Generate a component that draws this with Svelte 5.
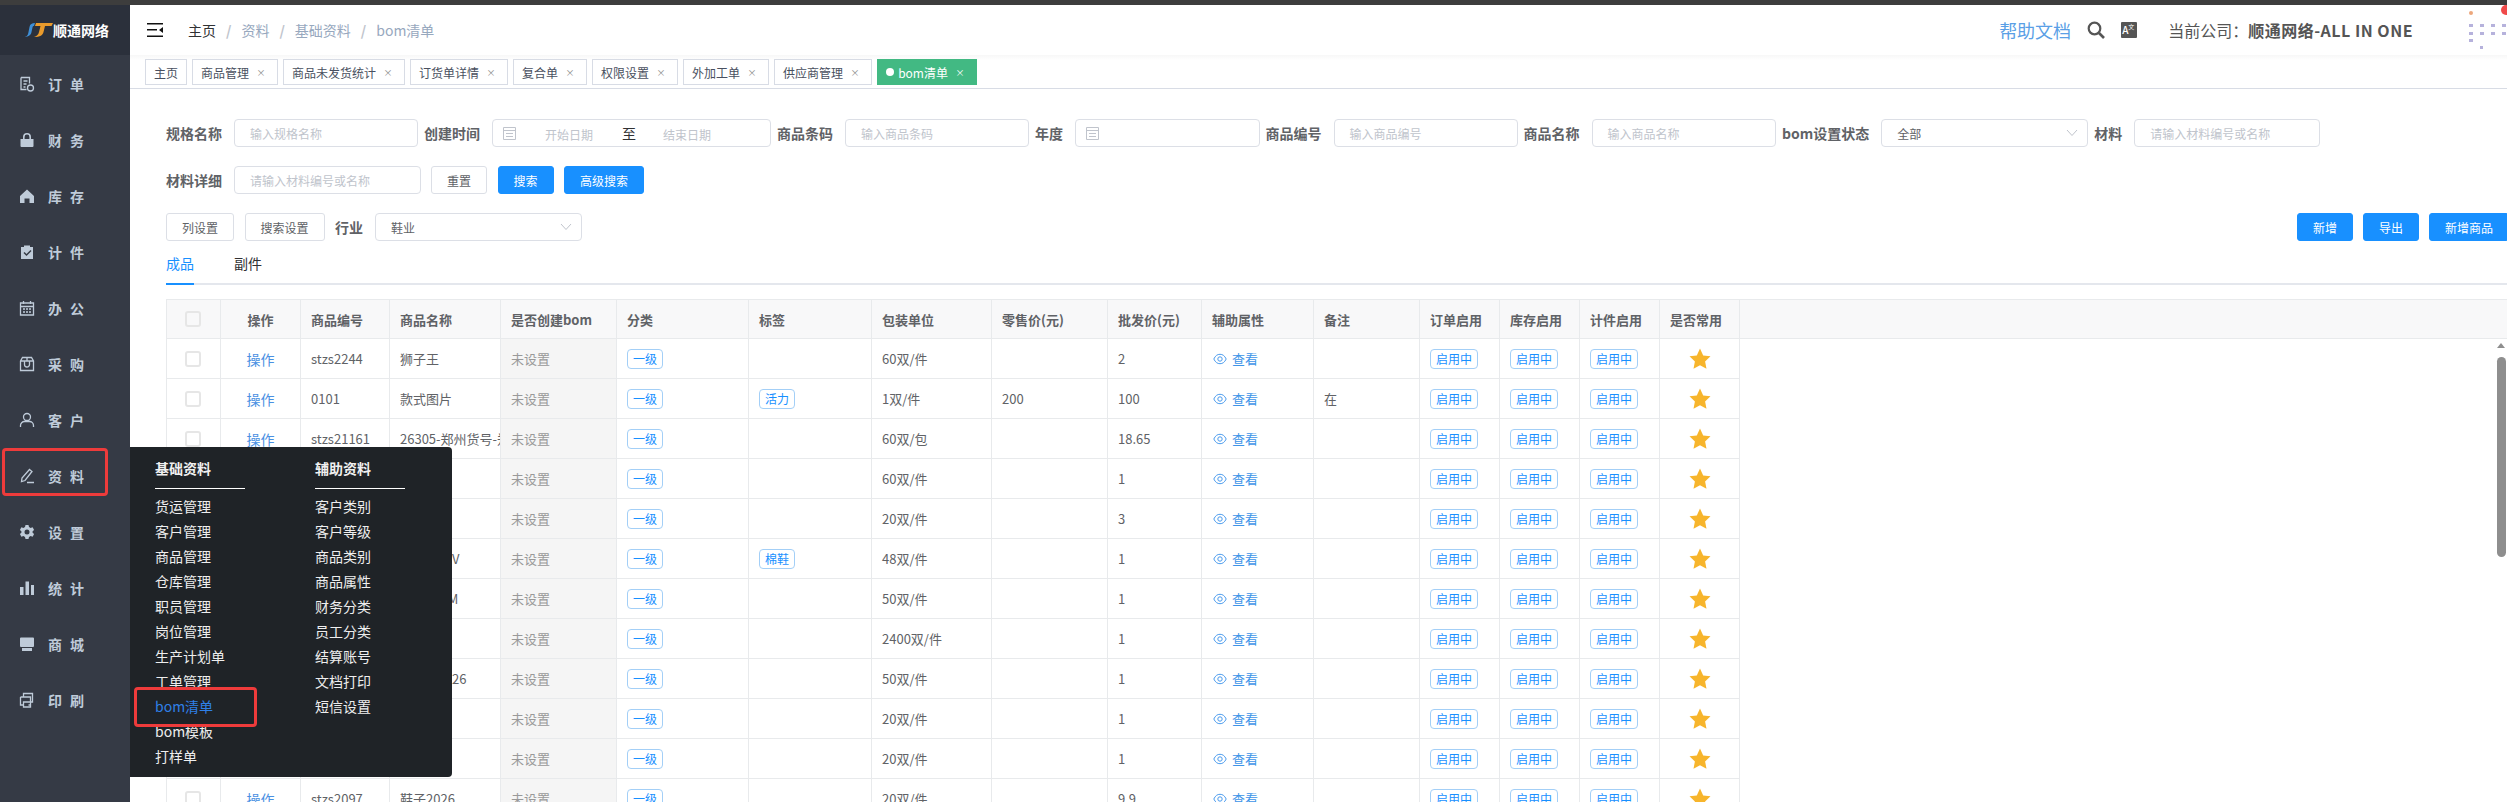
<script lang="ts">
  const navItems = [
    { label: "订单", solid: false, d: "M2 1.5h8.5v6M2 1.5v12h5.5M4.5 5h4M4.5 8h3M4.5 11h2M14.5 12a3 3 0 1 1-6 0a3 3 0 1 1 6 0z" },
    { label: "财务", solid: true, d: "M1.5 7h13v7a1 1 0 0 1-1 1h-11a1 1 0 0 1-1-1zM4 7V5a4 4 0 0 1 8 0v2h-1.6V5a2.4 2.4 0 0 0-4.8 0v2z" },
    { label: "库存", solid: true, d: "M8 1.5 15 8v7h-4.5v-4.5h-5V15H1V8z" },
    { label: "计件", solid: true, d: "M2 3h3V1.5h6V3h3v12H2zM4.5 9l1-1 2 2 4-4 1 1-5 5z" },
    { label: "办公", solid: false, d: "M1.5 3h13v12h-13zM1.5 6.5h13M4.5 1v3M11.5 1v3M4 9h2M7 9h2M10 9h2M4 12h2M7 12h2M10 12h2" },
    { label: "采购", solid: false, d: "M1.5 5 3.5 1.5h9L14.5 5v9.5h-13zM1.5 5h13M8 1.5V5M5.5 5v3.5a2.5 2.5 0 0 0 5 0V5" },
    { label: "客户", solid: false, d: "M8 1.5a3.5 3.5 0 1 1 0 7a3.5 3.5 0 1 1 0-7zM1.5 15v-1.5a4 4 0 0 1 4-4h5a4 4 0 0 1 4 4V15" },
    { label: "资料", solid: false, d: "M10.5 1.5l2.5 2-7 9-3.5 1 .5-3.5zM8 14.5h7" },
    { label: "设置", solid: true, d: "M6.5 1h3l.5 2 1.6.9 2-.6 1.5 2.6-1.5 1.4v1.4l1.5 1.4-1.5 2.6-2-.6-1.6.9-.5 2h-3l-.5-2-1.6-.9-2 .6L.9 10.1l1.5-1.4V7.3L.9 5.9l1.5-2.6 2 .6L6 3zM8 5.5a2.5 2.5 0 1 0 0 5a2.5 2.5 0 1 0 0-5z" },
    { label: "统计", solid: true, d: "M1 7h3.5v8H1zM6.5 1.5h3.5V15H6.5zM12 5h3v10h-3z" },
    { label: "商城", solid: true, d: "M2 1.5h12a1 1 0 0 1 1 1V10a1 1 0 0 1-1 1H2a1 1 0 0 1-1-1V2.5a1 1 0 0 1 1-1zM3 12h10v3H3z" },
    { label: "印刷", solid: false, d: "M4.5 5V1.5h9V10h-2M1.5 5h10v8h-2M1.5 5v8h3M4.5 10h7v5h-7z" },
  ];

  const tabs = ["商品管理", "商品未发货统计", "订货单详情", "复合单", "权限设置", "外加工单", "供应商管理"];

  const filterRow = [
    { label: "规格名称", kind: "input", ph: "输入规格名称", width: 184 },
    { label: "创建时间", kind: "range", width: 279 },
    { label: "商品条码", kind: "input", ph: "输入商品条码", width: 184 },
    { label: "年度", kind: "date", width: 184.5 },
    { label: "商品编号", kind: "input", ph: "输入商品编号", width: 184 },
    { label: "商品名称", kind: "input", ph: "输入商品名称", width: 184.5 },
    { label: "bom设置状态", kind: "select", value: "全部", width: 207 },
    { label: "材料", kind: "input", ph: "请输入材料编号或名称", width: 186 },
  ];

  const colWidths = [55, 80, 89, 111, 116, 132, 123, 120, 116, 94, 112, 106, 80, 80, 80, 80];
  const headers = ["商品编号", "商品名称", "是否创建bom", "分类", "标签", "包装单位", "零售价(元)", "批发价(元)", "辅助属性", "备注", "订单启用", "库存启用", "计件启用", "是否常用"];

  const rows = [
    { code: "stzs2244", name: "狮子王", tag: "", pack: "60双/件", retail: "", price: "2", note: "" },
    { code: "0101", name: "款式图片", tag: "活力", pack: "1双/件", retail: "200", price: "100", note: "在" },
    { code: "stzs21161", name: "26305-郑州货号-郑州", tag: "", pack: "60双/包", retail: "", price: "18.65", note: "" },
    { code: "", name: "", tag: "", pack: "60双/件", retail: "", price: "1", note: "" },
    { code: "", name: "", tag: "", pack: "20双/件", retail: "", price: "3", note: "" },
    { code: "", name: "女款棉鞋V", tag: "棉鞋", pack: "48双/件", retail: "", price: "1", note: "" },
    { code: "", name: "棉鞋026M", tag: "", pack: "50双/件", retail: "", price: "1", note: "" },
    { code: "", name: "", tag: "", pack: "2400双/件", retail: "", price: "1", note: "" },
    { code: "", name: "鞋子款式26", tag: "", pack: "50双/件", retail: "", price: "1", note: "" },
    { code: "", name: "", tag: "", pack: "20双/件", retail: "", price: "1", note: "" },
    { code: "", name: "", tag: "", pack: "20双/件", retail: "", price: "1", note: "" },
    { code: "stzs2097", name: "鞋子2026", tag: "", pack: "20双/件", retail: "", price: "9.9", note: "" },
  ];

  const menuBase = ["货运管理", "客户管理", "商品管理", "仓库管理", "职员管理", "岗位管理", "生产计划单", "工单管理", "bom清单", "bom模板", "打样单"];
  const menuAux = ["客户类别", "客户等级", "商品类别", "商品属性", "财务分类", "员工分类", "结算账号", "文档打印", "短信设置"];

  // thumbnail in the top right corner
  const thumbDots = [
    [0, 0], [11, 0], [22, 0], [33, 0],
    [0, 8], [11, 8], [22, 8], [33, 8],
    [0, 15],
  ];
</script>

<div class="page">
  <div class="strip"></div>
  <div class="shell">
    <aside class="sidebar">
      <div class="logo">
        <svg width="30" height="16" viewBox="0 0 30 16">
          <path d="M1 15C3 15 5 14 5.500 10L6.500 5C7 2 9 1 12 1L11 4C10 4 9.700 4.500 9.500 5.500L8.500 10C8 13.500 5 15 1 15z" fill="#3f8fd6" />
          <path d="M13 1h17l-1.500 3H22l-1.500 6C20 13 17 15 11 15c3-1 4.500-2.500 5-5L17.500 4H12z" fill="#e99a2c" />
        </svg>
        <span>顺通网络</span>
      </div>
      <nav>
        {#each navItems as item}
          <div class="nav-item">
            <svg class="nav-icon" class:solid={item.solid} viewBox="0 0 16 16"><path d={item.d} /></svg>
            <span>{item.label}</span>
          </div>
        {/each}
      </nav>
    </aside>

    <main class="main">
      <header class="topbar">
        <svg class="hamburger" width="16" height="14" viewBox="0 0 16 14">
          <path d="M0 0h16v1.500H0zM0 6h10v1.500H0zM0 12.500h16V14H0zM16 4v6l-4-3z" fill="#111" />
        </svg>
        <div class="crumbs">
          <span class="crumb-home">主页</span>
          <span class="sep">/</span>
          <span>资料</span>
          <span class="sep">/</span>
          <span>基础资料</span>
          <span class="sep">/</span>
          <span>bom清单</span>
        </div>
        <div class="top-right">
          <span class="help">帮助文档</span>
          <svg class="search" width="18" height="18" viewBox="0 0 18 18">
            <circle cx="7.500" cy="7.500" r="5.800" fill="none" stroke="#555" stroke-width="2.200" />
            <path d="M12 12l5 5" stroke="#555" stroke-width="2.600" />
          </svg>
          <span class="lang"><b>A</b><i>文</i></span>
          <span class="company">当前公司：<b>顺通网络-ALL IN ONE</b></span>
          <svg class="thumb" width="40" height="50" viewBox="0 0 40 50">
            <circle cx="39" cy="5" r="5" fill="#f04a4a" />
            <circle cx="4" cy="8" r="2" fill="#eca77c" />
            {#each thumbDots as dot}
              <rect x={dot[0] + 2} y={dot[1] + 19} width="4" height="3" fill="#8f88c9" opacity="0.65" />
            {/each}
            <rect x="13" y="41" width="3" height="3" fill="#8f88c9" opacity="0.65" />
          </svg>
        </div>
      </header>

      <div class="tabbar">
        <span class="tab">主页</span>
        {#each tabs as tab}
          <span class="tab">{tab}<span class="close">×</span></span>
        {/each}
        <span class="tab active"><span class="dot"></span>bom清单<span class="close">×</span></span>
      </div>

      <section class="content">
        <div class="filter-row">
          {#each filterRow as f}
            <div class="field">
              <label>{f.label}</label>
              {#if f.kind === "input"}
                <div class="control placeholder" style:width="{f.width}px">{f.ph}</div>
              {:else if f.kind === "select"}
                <div class="control select" style:width="{f.width}px">
                  {f.value}
                  <svg class="chevron" width="12" height="8" viewBox="0 0 12 8"><path d="M1 1l5 5.500L11 1" /></svg>
                </div>
              {:else}
                <div class="control date" style:width="{f.width}px">
                  <svg class="cal" width="13" height="14" viewBox="0 0 13 14"><path d="M.5 1.500h12v12H.5zM.5 4.500h12M3 7.500h7M3 10.500h7" /></svg>
                  {#if f.kind === "range"}
                    <span class="date-ph">开始日期</span>
                    <span class="to">至</span>
                    <span class="date-ph">结束日期</span>
                  {/if}
                </div>
              {/if}
            </div>
          {/each}
        </div>

        <div class="filter-row second">
          <div class="field">
            <label>材料详细</label>
            <div class="control placeholder detail">请输入材料编号或名称</div>
          </div>
          <button class="btn">重置</button>
          <button class="btn primary">搜索</button>
          <button class="btn primary">高级搜索</button>
        </div>

        <div class="filter-row third">
          <button class="btn">列设置</button>
          <button class="btn">搜索设置</button>
          <div class="field">
            <label>行业</label>
            <div class="control select industry">
              鞋业
              <svg class="chevron" width="12" height="8" viewBox="0 0 12 8"><path d="M1 1l5 5.500L11 1" /></svg>
            </div>
          </div>
          <div class="actions">
            <button class="btn primary">新增</button>
            <button class="btn primary">导出</button>
            <button class="btn primary">新增商品</button>
          </div>
        </div>

        <div class="pane-tabs">
          <span class="pane-tab current">成品</span>
          <span class="pane-tab">副件</span>
        </div>

        <table class="grid">
          <colgroup>
            {#each colWidths as w}
              <col style:width="{w}px" />
            {/each}
            <col />
          </colgroup>
          <thead>
            <tr>
              <th class="first"><span class="check"></span></th>
              <th class="center">操作</th>
              {#each headers as h}
                <th>{h}</th>
              {/each}
              <th class="filler"></th>
            </tr>
          </thead>
          <tbody>
            {#each rows as row}
              <tr>
                <td class="first"><span class="check"></span></td>
                <td class="center link">操作</td>
                <td>{row.code}</td>
                <td class="clip">{row.name}</td>
                <td class="unset">未设置</td>
                <td><span class="chip">一级</span></td>
                <td>{#if row.tag}<span class="chip">{row.tag}</span>{/if}</td>
                <td>{row.pack}</td>
                <td>{row.retail}</td>
                <td>{row.price}</td>
                <td class="view">
                  <svg width="14" height="14" viewBox="0 0 14 14">
                    <path d="M.8 7C2.500 3.500 4.500 2.300 7 2.300S11.500 3.500 13.200 7C11.500 10.500 9.500 11.700 7 11.700S2.500 10.500.8 7z" fill="none" stroke="#4a9bee" />
                    <circle cx="7" cy="7" r="2.200" fill="none" stroke="#4a9bee" />
                  </svg>
                  查看
                </td>
                <td>{row.note}</td>
                <td><span class="chip">启用中</span></td>
                <td><span class="chip">启用中</span></td>
                <td><span class="chip">启用中</span></td>
                <td class="star-cell">
                  <svg width="22" height="21" viewBox="0 0 22 21"><path d="M11 .5l3.200 6.900 7.300.9-5.400 5.100 1.400 7.400L11 17.200l-6.500 3.600 1.400-7.400L.5 8.300l7.300-.9z" fill="#f7b52c" /></svg>
                </td>
                <td class="filler"></td>
              </tr>
            {/each}
          </tbody>
        </table>
      </section>
    </main>
  </div>

  <div class="menu">
    <div class="menu-col">
      <h4>基础资料</h4>
      {#each menuBase as m}
        <div class="menu-item" class:on={m === "bom清单"}>{m}</div>
      {/each}
    </div>
    <div class="menu-col">
      <h4>辅助资料</h4>
      {#each menuAux as m}
        <div class="menu-item">{m}</div>
      {/each}
    </div>
  </div>

  <div class="mark mark-nav"></div>
  <div class="mark mark-menu"></div>

  <div class="scrollbar">
    <span class="arrow"></span>
    <span class="thumb-bar"></span>
  </div>
</div>

<style>
  :global(body) {
    margin: 0;
    background: #fff;
  }

  .page {
    position: relative;
    width: 2507px;
    height: 802px;
    overflow: hidden;
    font-family: "Noto Sans CJK SC", "Noto Sans", sans-serif;
    font-size: 13px;
    color: #606266;
  }

  .strip {
    height: 5px;
    background: #3d3d3d;
  }

  .shell {
    display: flex;
    height: 797px;
  }

  .sidebar {
    width: 130px;
    flex: none;
    background: #353a45;
    color: #bfcbd9;
  }

  .logo {
    height: 50px;
    background: #2b303b;
    display: flex;
    align-items: center;
    padding-left: 23px;
    color: #fff;
    font-weight: 700;
    font-size: 14px;
  }

  nav {
    padding-top: 1px;
  }

  .nav-item {
    height: 56px;
    display: flex;
    align-items: center;
    padding-left: 19px;
    gap: 13px;
    font-size: 14px;
    font-weight: 700;
    letter-spacing: 8px;
  }

  .nav-icon {
    width: 16px;
    height: 16px;
    fill: none;
    stroke: #bfcbd9;
    stroke-width: 1.3;
  }

  .nav-icon.solid {
    fill: #bfcbd9;
    fill-rule: evenodd;
    stroke: none;
  }

  .main {
    flex: 1;
    min-width: 0;
  }

  .topbar {
    height: 50px;
    display: flex;
    align-items: center;
    padding-left: 17px;
  }

  .crumbs {
    margin-left: 25px;
    display: flex;
    font-size: 14px;
    color: #97a8be;
  }

  .crumb-home {
    color: #303133;
  }

  .sep {
    margin: 0 10px;
    color: #c0c4cc;
    font-weight: 700;
  }

  .top-right {
    margin-left: auto;
    display: flex;
    align-items: center;
  }

  .help {
    font-size: 18px;
    color: #5a9fe6;
  }

  .search {
    margin-left: 16px;
  }

  .lang {
    margin-left: 16px;
    width: 16px;
    height: 16px;
    background: #555;
    border-radius: 1px;
    color: #fff;
    display: flex;
    font-size: 10px;
    line-height: 16px;
    overflow: hidden;
  }

  .lang b {
    font-weight: 500;
    padding-left: 1px;
  }

  .lang i {
    font-style: normal;
    font-size: 6px;
    line-height: 10px;
  }

  .company {
    margin-left: 31px;
    font-size: 16px;
    color: #555;
  }

  .company b {
    font-weight: 700;
    letter-spacing: 0.5px;
  }

  .thumb {
    margin-left: 54px;
  }

  .tabbar {
    height: 34px;
    box-sizing: border-box;
    padding: 4px 0 0 15px;
    display: flex;
    gap: 5px;
    background: linear-gradient(#f7f7f7, #fff 5px);
    border-bottom: 1px solid #d8dce5;
  }

  .tab {
    height: 26px;
    box-sizing: border-box;
    padding: 0 8px;
    border: 1px solid #d8dce5;
    background: #fff;
    display: flex;
    align-items: center;
    font-size: 12px;
    color: #495060;
    white-space: nowrap;
  }

  .close {
    width: 16px;
    margin-left: 4px;
    text-align: center;
    font-size: 9px;
    color: #888;
  }

  .tab.active {
    background: #42b983;
    border-color: #42b983;
    color: #fff;
  }

  .tab.active .close {
    color: #fff;
  }

  .dot {
    width: 8px;
    height: 8px;
    border-radius: 50%;
    background: #fff;
    margin-right: 4px;
  }

  .content {
    padding: 30px 0 0 36px;
  }

  .filter-row {
    display: flex;
    align-items: center;
    height: 28px;
    gap: 6px;
  }

  .filter-row.second {
    margin-top: 19px;
    gap: 10.5px;
  }

  .filter-row.third {
    margin-top: 19px;
    gap: 10.500px;
  }

  .field {
    display: flex;
    align-items: center;
    gap: 12px;
  }

  label {
    font-size: 14px;
    font-weight: 700;
    color: #606266;
    white-space: nowrap;
  }

  .control {
    height: 28px;
    box-sizing: border-box;
    border: 1px solid #dcdfe6;
    border-radius: 4px;
    display: flex;
    align-items: center;
    font-size: 12px;
    background: #fff;
  }

  .placeholder {
    padding-left: 15px;
    color: #c0c4cc;
  }

  .detail {
    width: 186.500px;
  }

  .select {
    padding: 0 9px 0 15px;
    justify-content: space-between;
    color: #606266;
  }

  .industry {
    width: 207px;
  }

  .chevron {
    fill: none;
    stroke: #c0c4cc;
    stroke-width: 1;
  }

  .date {
    padding-left: 10px;
    color: #c0c4cc;
  }

  .cal {
    fill: none;
    stroke: #c0c4cc;
    stroke-width: 1;
  }

  .date-ph {
    width: 48px;
    margin-top: 2px;
  }

  .date-ph:nth-of-type(1) {
    margin-left: 29px;
  }

  .to {
    margin: 0 27px 0 29px;
    color: #303133;
    font-size: 14px;
    width: 14px;
  }

  .btn {
    height: 28px;
    box-sizing: border-box;
    padding: 0 15px;
    border: 1px solid #dcdfe6;
    border-radius: 3px;
    background: #fff;
    color: #606266;
    font: inherit;
    font-size: 12px;
    white-space: nowrap;
  }

  .btn.primary {
    background: #1890ff;
    border-color: #1890ff;
    color: #fff;
  }

  .actions {
    margin-left: auto;
    margin-right: -2px;
    display: flex;
    gap: 10px;
  }

  .pane-tabs {
    margin-top: 10px;
    height: 34px;
    box-sizing: border-box;
    border-bottom: 2px solid #e4e7ed;
    display: flex;
    gap: 40px;
    font-size: 14px;
    line-height: 25px;
    color: #303133;
  }

  .pane-tab {
    height: 34px;
    box-sizing: border-box;
  }

  .pane-tab.current {
    color: #1890ff;
    border-bottom: 2px solid #1890ff;
  }

  .grid {
    margin-top: 14px;
    width: 100%;
    table-layout: fixed;
    border-collapse: separate;
    border-spacing: 0;
  }

  th,
  td {
    height: 40px;
    box-sizing: border-box;
    padding: 0 10px;
    border-bottom: 1px solid #e8eaec;
    border-right: 1px solid #e8eaec;
    text-align: left;
    white-space: nowrap;
    overflow: hidden;
    font-size: 13px;
    vertical-align: middle;
  }

  th {
    background: #f8f8f9;
    border-top: 1px solid #e8eaec;
    font-weight: 700;
    color: #606266;
  }

  .first {
    border-left: 1px solid #e8eaec;
    padding: 0 0 0 18px;
  }

  .center {
    text-align: center;
  }

  .link {
    color: #4a90e2;
    font-size: 14px;
  }

  .clip {
    text-overflow: clip;
  }

  td.unset {
    background: #f5f5f5;
    color: #999;
  }

  td.filler {
    border: 0;
  }

  th.filler {
    border-right: 0;
  }

  .check {
    display: block;
    width: 16px;
    height: 16px;
    box-sizing: border-box;
    border: 2px solid #e6e6e6;
    border-radius: 3px;
    background: #fff;
  }

  th .check {
    background: #f8f8f9;
  }

  .chip {
    display: inline-block;
    height: 20px;
    box-sizing: border-box;
    padding: 0 5px;
    border: 1px solid #a3cff7;
    border-radius: 4px;
    background: #fff;
    font-size: 12px;
    line-height: 18px;
    color: #1890ff;
    vertical-align: middle;
  }

  .view {
    color: #3d94e8;
  }

  .view svg {
    vertical-align: -2px;
    margin: 0 2px 0 1px;
  }

  .star-cell {
    padding: 3px 0 0 29px;
  }

  .menu {
    position: absolute;
    left: 130px;
    top: 447px;
    width: 321.500px;
    height: 330px;
    box-sizing: border-box;
    padding: 9px 0 0 25px;
    background: #1f2327;
    border-radius: 0 4px 4px 0;
    display: flex;
    gap: 70px;
    color: #eee;
    font-size: 14px;
  }

  .menu-col {
    width: 90px;
  }

  h4 {
    margin: 0 0 5px;
    height: 32px;
    line-height: 24px;
    border-bottom: 1px solid #fff;
    font-size: 14px;
    font-weight: 700;
    color: #f0f0f0;
  }

  .menu-item {
    height: 25px;
    line-height: 25px;
    white-space: nowrap;
  }

  .menu-item.on {
    color: #2f80e8;
  }

  .mark {
    position: absolute;
    box-sizing: border-box;
    border: 3.500px solid #ee3b3b;
    border-radius: 4px;
  }

  .mark-nav {
    left: 2px;
    top: 448px;
    width: 106px;
    height: 48px;
  }

  .mark-menu {
    left: 134px;
    top: 687px;
    width: 123px;
    height: 40px;
  }

  .scrollbar {
    position: absolute;
    left: 2497px;
    top: 343px;
    width: 9px;
  }

  .arrow {
    display: block;
    width: 0;
    height: 0;
    border: 4.500px solid transparent;
    border-top: 0;
    border-bottom: 5px solid #8e8e8e;
  }

  .thumb-bar {
    display: block;
    margin-top: 9px;
    height: 200px;
    background: #8e8e8e;
    border-radius: 5px;
  }
</style>
